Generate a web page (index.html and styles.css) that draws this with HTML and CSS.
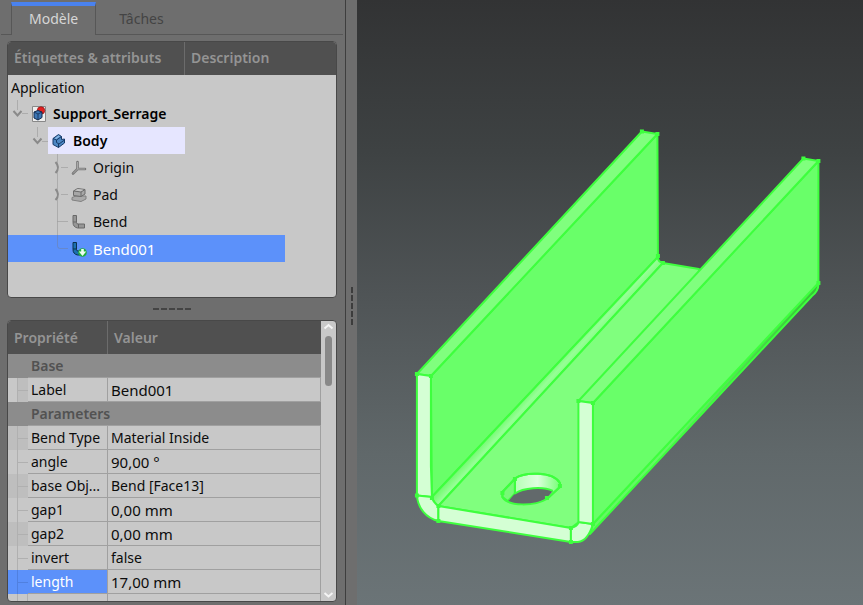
FILE: index.html
```html
<!DOCTYPE html>
<html lang="fr">
<head>
<meta charset="utf-8">
<title>Support_Serrage</title>
<link rel="stylesheet" href="styles.css">
</head>
<body>
<aside class="dock">
  <div class="tabs" role="tablist">
    <button class="tab tab-active" role="tab" aria-selected="true">Modèle</button>
    <button class="tab" role="tab" aria-selected="false">Tâches</button>
  </div>
  <section class="box tree-box">
    <div class="head"><span class="head-cell head-tree">Étiquettes &amp; attributs</span><span class="head-cell">Description</span></div>
    <ul class="tree">
      <li class="row root">Application</li>
      <li class="row">
        <svg class="branch" width="20" height="27" viewBox="0 0 20 27"><path class="guide" d="M9.500 0V10M14 13.500H20"/><path class="chevron" d="M5.500 11L9.500 15.500L13.500 11"/></svg>
        <span class="label strong"><svg class="icon" viewBox="0 0 16 16"><path d="M1.500 .5H14.500V15.500H1.500Z" fill="#eee" stroke="#888"/><circle cx="10" cy="4.500" r="3.800" fill="#e02020" stroke="#801010" stroke-width=".6"/><path d="M3 6L7 4.500L11 6V11.500L7 14L3 12Z" fill="#3b76b5" stroke="#112b50"/><path d="M3 6L7 8L11 6M7 8V14" stroke="#112b50" stroke-width=".8" fill="none"/></svg>Support_Serrage</span>
      </li>
      <li class="row">
        <i class="indent"></i><svg class="branch" width="20" height="27" viewBox="0 0 20 27"><path class="guide" d="M9.500 0V10M14 14.500H20"/><path class="chevron" d="M5.500 11.500L9.500 16L13.500 11.500"/></svg>
        <span class="label strong body-label"><svg class="icon" viewBox="0 0 16 16"><path d="M2 5.500L7.500 1.500L10.500 3.500V6.500L13.500 6V10L7.500 14.500L2 11.500Z" fill="#4c87c4" stroke="#173b68"/><path d="M2 5.500L5.500 7V9.500L8 11L13.500 7M7.500 11V14.500M5.500 7L10.500 3.500" fill="none" stroke="#173b68"/><path d="M3.500 5.500L7.500 2.500L9 3.500L5.300 6Z" fill="#8ab8e6"/></svg>Body</span>
      </li>
      <li class="row">
        <i class="indent"></i><i class="indent"></i><svg class="branch" width="20" height="27" viewBox="0 0 20 27"><path class="guide" d="M9.500 0V27M13 13.500H20"/><path class="chevron" d="M7.500 8Q12.500 13.500 7.500 19"/></svg>
        <span class="label"><svg class="icon" viewBox="0 0 16 16"><path d="M6.500 9V2M6.500 9H14M6.500 9L2 13.500" fill="none" stroke="#777" stroke-width="2.600" stroke-linecap="round"/><path d="M6.500 9V2M6.500 9H14M6.500 9L2 13.500" fill="none" stroke="#b5b5b5" stroke-width=".8"/></svg>Origin</span>
      </li>
      <li class="row">
        <i class="indent"></i><i class="indent"></i><svg class="branch" width="20" height="27" viewBox="0 0 20 27"><path class="guide" d="M9.500 0V27M13 13.500H20"/><path class="chevron" d="M7.500 8Q12.500 13.500 7.500 19"/></svg>
        <span class="label"><svg class="icon" viewBox="0 0 16 16"><path d="M1 10.500L5 9H15V12L10 14.500L1 13Z" fill="#aaa" stroke="#808080"/><path d="M2.500 4L6.500 1.500L14 2.500V7L10 9.500L2.500 8.500Z" fill="#a7a7a7" stroke="#6c6c6c"/><path d="M2.500 4L10 5L14 2.500M10 5V9.500" fill="none" stroke="#6c6c6c"/><path d="M4 3.500L6.800 2L12.500 2.800L9.700 4.300Z" fill="#c5c5c5"/></svg>Pad</span>
      </li>
      <li class="row">
        <i class="indent"></i><i class="indent"></i><svg class="branch" width="20" height="27" viewBox="0 0 20 27"><path class="guide" d="M9.500 0V27M9.500 13.500H20"/></svg>
        <span class="label"><svg class="icon" viewBox="0 0 16 16"><path d="M2 1.500H5.500V8.500Q5.500 10 7 10H13.500V14H6.500Q2 13 2 8.500Z" fill="#969696" stroke="#686868"/><path d="M2 8H5.500M7.500 10V14" stroke="#686868"/></svg>Bend</span>
      </li>
      <li class="row selected">
        <i class="indent"></i><i class="indent"></i><svg class="branch" width="20" height="27" viewBox="0 0 20 27"><path class="guide" d="M9.500 0V11Q9.500 13.500 12 13.500H20"/></svg>
        <span class="label num"><svg class="icon" viewBox="0 0 16 16"><path d="M2 1.500H5.500V8.500Q5.500 10 7 10H10V14H6.500Q2 13 2 8.500Z" fill="#1b70b0" stroke="#0b304d"/><path d="M2 8H5.500" stroke="#0b304d"/><circle cx="11.500" cy="11.500" r="4.300" fill="#21b03d"/><path d="M10.200 8H12.800V10.500H15.200L11.500 15L7.800 10.500H10.200Z" fill="#edfff0"/></svg>Bend001</span>
      </li>
    </ul>
  </section>
  <div class="handle"><i></i><i></i><i></i><i></i><i></i></div>
  <section class="box prop-box">
    <div class="prop-view">
      <table class="props">
        <colgroup><col class="col-a"><col class="col-b"><col class="col-name"><col></colgroup>
        <thead><tr><th colspan="3">Propriété</th><th>Valeur</th></tr></thead>
        <tbody>
          <tr class="group"><td colspan="2"></td><th colspan="2">Base</th></tr>
          <tr class="half"><td class="g"></td><td class="g twig"></td><td>Label</td><td class="num">Bend001</td></tr>
          <tr class="group"><td colspan="2"></td><th colspan="2">Parameters</th></tr>
          <tr class="dark"><td class="g"></td><td class="g twig"></td><td>Bend Type</td><td>Material Inside</td></tr>
          <tr><td class="g"></td><td class="g twig"></td><td>angle</td><td class="num">90,00 °</td></tr>
          <tr class="dark"><td class="g"></td><td class="g twig"></td><td>base Obj...</td><td>Bend [Face13]</td></tr>
          <tr><td class="g"></td><td class="g twig"></td><td>gap1</td><td class="num">0,00 mm</td></tr>
          <tr class="dark"><td class="g"></td><td class="g twig"></td><td>gap2</td><td class="num">0,00 mm</td></tr>
          <tr><td class="g"></td><td class="g twig"></td><td>invert</td><td>false</td></tr>
          <tr class="current"><td class="g"></td><td class="g twig"></td><td>length</td><td class="num">17,00 mm</td></tr>
          <tr><td class="g"></td><td class="g"></td><td></td><td></td></tr>
        </tbody>
      </table>
    </div>
    <div class="scroll">
      <svg width="15" height="12" viewBox="0 0 15 12"><path d="M3.500 7.500L7.500 4L11.500 7.500"/></svg>
      <div class="thumb"></div>
      <svg width="15" height="12" viewBox="0 0 15 12"><path d="M3.500 4L7.500 7.500L11.500 4"/></svg>
    </div>
  </section>
</aside>
<div class="splitter"><i></i><i></i><i></i><i></i><i></i></div>
<main class="view">
  <svg class="model" viewBox="357 0 506 605" preserveAspectRatio="xMidYMid slice" role="img" aria-label="Support_Serrage">
    <defs>
      <linearGradient id="bend" gradientUnits="userSpaceOnUse" x1="540" y1="380" x2="550" y2="389"><stop offset="0" stop-color="#76fb73"/><stop offset=".5" stop-color="#96ff96"/><stop offset="1" stop-color="#80ff7e"/></linearGradient>
      <linearGradient id="outer" gradientUnits="userSpaceOnUse" x1="700" y1="410" x2="707" y2="416"><stop offset="0" stop-color="#64f963"/><stop offset="1" stop-color="#38c437"/></linearGradient>
      <linearGradient id="bore"><stop offset="0" stop-color="#b5ffb5"/><stop offset=".5" stop-color="#deffde"/><stop offset="1" stop-color="#77ff77"/></linearGradient>
    </defs>
    <g class="edges">
      <path fill="#69ff69" d="M431 376L657.500 134L658 257L432 497Z"/>
      <path fill="#80ff7e" d="M417 374L642 131.500L657.500 134L431 376Z"/>
      <path fill="url(#bend)" d="M432 497L658 257Q658 262 663 263L438.500 506Q434 503 432 497Z"/>
      <path fill="#80ff7e" d="M438.500 506L663 263L699 269L700 400L579 522L571 528Z"/>
      <path fill="url(#bore)" d="M515 493.500V478.500C524 472 553 471 560 483V487L547 499L515 493.500Z"/>
      <path fill="#78f977" d="M502.500 492L515 479V493.500L508 501L502.500 497Z"/>
      <path class="plain" fill="#62696b" d="M508 501.500L515 493.500C522 488 543 486 553 491L547 498C537 505 518 507 508 501.500Z"/>
      <path fill="none" d="M502.500 492L515 478.500C524 472 553 471 560 483V487L547 499C535 506 508 507 502.500 497Z"/>
      <path fill="none" d="M515 478.500V493.500C523 488 543 486 553 491"/>
      <path fill="url(#outer)" d="M593 524L818.500 283Q819 291 812 296L590 534Z"/>
      <path fill="#69ff69" d="M593 403L818.500 161V283L593 524Z"/>
      <path fill="#80ff7e" d="M578.500 401L803.500 158.500L818.500 161L593 403Z"/>
      <path fill="#d4ffd4" d="M417 374L431 376V466L432 497L417 495.500Z"/>
      <path fill="#d4ffd4" d="M417 495.500L432 497Q433 502 438.500 506V521C426 518 418 508 417 495.500Z"/>
      <path fill="#d4ffd4" d="M438.500 506L571 528V542L438.500 521Z"/>
      <path fill="#d4ffd4" d="M571 528Q577 527 579 522L593 524Q588 541 578 542H571Z"/>
      <path fill="#d4ffd4" d="M578.500 401L593 403V524L578.500 522Z"/>
    </g>
    <path class="points" d="M417 374h0M431 376h0M417 495.500h0M432 498h0M438.500 506h0M438.500 521h0M571 528h0M571 542h0M578.500 401h0M593 403h0M593 524h0M642 131.500h0M657.500 134h0M658 256h0M663 263h0M803.500 158.500h0M818.500 161h0M818.500 283h0M515 479h0M502.500 493h0M560 486h0M547 498h0"/>
  </svg>
</main>
</body>
</html>
```
FILE: styles.css
```css
* { box-sizing: border-box; }

body {
  margin: 0;
  height: 100vh;
  display: flex;
  overflow: hidden;
  background: #6e6e6e;
  color: #0c0c0c;
  font: 14px/20px "Noto Sans", sans-serif;
}

.dock {
  flex: 0 0 40%;
  display: flex;
  flex-direction: column;
  padding: 2px 8px 3px 7px;
  min-width: 0;
}

.tabs {
  display: flex;
  height: 33px;
  margin: 0 -6px 6px;
  padding-left: 10px;
  border-bottom: 1px solid #575757;
}

.tab {
  height: 33px;
  padding: 0 23px;
  border: 0;
  background: none;
  color: #444;
  font: inherit;
}

.tab-active {
  padding: 0 17px 4px;
  border: solid #575757;
  border-width: 0 1px;
  border-top: 4px solid #4a82ee;
  background: #6e6e6e;
  color: #d6d6d6;
}

.box {
  border: 1px solid #484848;
  border-radius: 4px;
  background: #c8c8c8;
  overflow: hidden;
  min-height: 0;
}

.tree-box { flex: 257 1 0; }

.head {
  display: flex;
  height: 33px;
  background: #505050;
  color: #949494;
  font-weight: 600;
}

.head-cell { padding: 6px; }

.head-tree {
  width: 177px;
  border-right: 1px solid #6c6c6c;
}

.tree {
  margin: 0;
  padding: 0;
  list-style: none;
}

.row {
  display: flex;
  height: 27px;
  align-items: center;
}

.root {
  height: 25px;
  padding-left: 3px;
}

.indent { flex: 0 0 20px; }
.branch { flex: 0 0 20px; }

.guide {
  fill: none;
  stroke: #777;
  stroke-opacity: .35;
}

.chevron {
  fill: none;
  stroke: #8a8a8a;
  stroke-width: 2;
}

.label {
  display: flex;
  align-items: center;
  gap: 6px;
  height: 27px;
  padding-left: 3px;
}

.icon {
  width: 16px;
  height: 16px;
}

.strong { font-weight: 600; color: #000; }

.num { font-size: 15px; }

.body-label {
  width: 137px;
  background: #e6e6ff;
}

.selected {
  width: 277px;
  background: #5c91fa;
  color: #fff;
}

.handle {
  display: flex;
  align-items: center;
  justify-content: center;
  gap: 2px;
  height: 22px;
}

.handle i {
  width: 6px;
  height: 2px;
  background: #444;
}

.prop-box {
  display: flex;
  flex: 282 1 0;
}

.prop-view {
  flex: 1;
  min-width: 0;
  overflow: hidden;
}

.props {
  width: 100%;
  table-layout: fixed;
  border-collapse: separate;
  border-spacing: 0;
}

.col-a { width: 10px; }
.col-b { width: 10px; }
.col-name { width: 80px; }

.props td,
.props th {
  height: 24px;
  padding: 0 3px;
  border: solid #a0a0a0;
  border-width: 0 1px 1px 0;
  white-space: nowrap;
  text-align: left;
}

.props thead th {
  height: 33px;
  padding: 0 6px;
  border: 0 solid #6c6c6c;
  background: #505050;
  color: #949494;
  font-weight: 600;
}

.props thead th:first-child { border-right-width: 1px; }

.props .group td,
.props .group th {
  border-right: 0;
  background: #8c8c8c;
  color: #525252;
  font-weight: 600;
}

.props .group td { border-bottom: 0; }

.props .g {
  padding: 0;
  border-width: 0 1px 0 0;
  border-color: #b0b0b0;
}

.props .twig {
  border-right: 0;
  background: linear-gradient(#b0b0b0, #b0b0b0) center / 100% 1px no-repeat;
}

.props .dark .g,
.props .half .twig { background-color: #bebebe; }

.props .current td:not(:last-child) {
  background-color: #5c91fa;
  color: #fff;
}

.props .current .g { border-color: #5080df; }

.props .current .twig {
  background-image: linear-gradient(#5080df, #5080df);
}

.scroll {
  display: flex;
  flex: 0 0 15px;
  flex-direction: column;
  align-items: center;
}

.scroll path {
  fill: none;
  stroke: #f4f4f4;
  stroke-width: 2;
}

.scroll svg { flex: none; }
.scroll svg:last-child { margin-top: auto; }

.thumb {
  width: 7px;
  height: 50px;
  margin-top: 3px;
  border-radius: 4px;
  background: #888;
}

.splitter {
  display: flex;
  flex: 0 0 12px;
  flex-direction: column;
  align-items: center;
  justify-content: center;
  gap: 2px;
  padding-top: 6px;
  border-left: 1px solid #3e3e3e;
}

.splitter i {
  width: 2px;
  height: 6px;
  background: #3c3c3c;
}

.view {
  flex: 1;
  min-width: 0;
  background: linear-gradient(#323334, #3e4243 25%, #505557 50%, #60686a 75%, #6b7477);
}

.model {
  display: block;
  width: 100%;
  height: 100%;
}

.edges path {
  stroke: #3eff3e;
  stroke-width: 2px;
  stroke-linejoin: round;
}

.edges .plain { stroke: none; }

.points {
  fill: none;
  stroke: #3eff3e;
  stroke-width: 4px;
  stroke-linecap: square;
}
```
